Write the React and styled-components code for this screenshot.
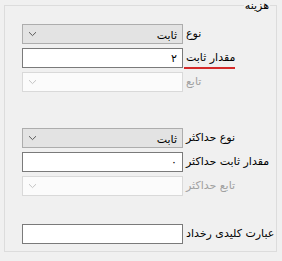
import React from 'react';
import styled, { createGlobalStyle } from 'styled-components';

const GlobalStyle = createGlobalStyle`
  body {
    margin: 0;
    background: #f0f0f0;
    font-family: "DejaVu Sans", Tahoma, sans-serif;
    font-size: 11px;
  }
`;

const Page = styled.div`
  width: 282px;
  height: 261px;
  background: #f0f0f0;
  padding: 0 5px 0 4px;
  box-sizing: border-box;
`;

const Group = styled.fieldset`
  margin: 0;
  padding: 13px 0 7px 17px;
  border: 1px solid #dcdcdc;
  min-width: 0;
`;

const Title = styled.legend`
  margin-right: 6px;
  padding: 0 1px;
  font-size: 11px;
  line-height: 11px;
  color: #000;
`;

const Section = styled.div`
  display: flex;
  flex-direction: column;
  gap: 4px;
  margin-bottom: ${p => p.$after || 0}px;
`;

const Row = styled.div`
  display: flex;
  direction: ltr;
  align-items: center;
  gap: 3px;
  height: 20px;
`;

const Combo = styled.div`
  width: 161px;
  height: 20px;
  box-sizing: border-box;
  display: flex;
  align-items: center;
  justify-content: space-between;
  padding: 0 5px 0 5px;
  background: ${p => (p.$disabled ? '#fbfbfb' : '#e3e3e3')};
  border: 1px solid ${p => (p.$disabled ? '#d9d9d9' : '#adadad')};
  color: #000;
`;

const ComboText = styled.span`
  direction: rtl;
  padding-top: 2px;
`;

const TextBox = styled.input`
  width: 161px;
  height: 20px;
  box-sizing: border-box;
  margin: 0;
  padding: 0 5px 0 4px;
  border: 1px solid #7a7a7a;
  background: #fff;
  font: inherit;
  color: #000;
  direction: rtl;
  text-align: right;
  outline: none;
`;

const Label = styled.span`
  direction: rtl;
  white-space: nowrap;
  color: ${p => (p.$disabled ? '#a0a0a0' : '#000')};
  margin-top: -2px;
  position: relative;
`;

const Underline = styled.span`
  position: absolute;
  left: -2px;
  right: 0;
  bottom: -5px;
  height: 2px;
  background: #d42a2a;
`;

const Chevron = ({ disabled }) => (
  <svg width="9" height="6" viewBox="0 0 9 6">
    <path d="M1 1.2 L4.5 4.6 L8 1.2" fill="none" stroke={disabled ? '#c4c4c4' : '#5a5a5a'} strokeWidth="1" />
  </svg>
);

const ComboField = ({ value, disabled }) => (
  <Combo $disabled={disabled}>
    <Chevron disabled={disabled} />
    <ComboText>{value}</ComboText>
  </Combo>
);

export default function App() {
  return (
    <Page>
      <GlobalStyle />
      <Group dir="rtl">
        <Title>هزینه</Title>
        <Section $after={36}>
          <Row>
            <ComboField value="ثابت" />
            <Label>نوع</Label>
          </Row>
          <Row>
            <TextBox readOnly value="۲" />
            <Label>
              مقدار ثابت
              <Underline />
            </Label>
          </Row>
          <Row>
            <ComboField disabled />
            <Label $disabled>تابع</Label>
          </Row>
        </Section>
        <Section $after={28}>
          <Row>
            <ComboField value="ثابت" />
            <Label>نوع حداکثر</Label>
          </Row>
          <Row>
            <TextBox readOnly value="۰" />
            <Label>مقدار ثابت حداکثر</Label>
          </Row>
          <Row>
            <ComboField disabled />
            <Label $disabled>تابع حداکثر</Label>
          </Row>
        </Section>
        <Section>
          <Row>
            <TextBox readOnly value="" />
            <Label>عبارت کلیدی رخداد</Label>
          </Row>
        </Section>
      </Group>
    </Page>
  );
}
